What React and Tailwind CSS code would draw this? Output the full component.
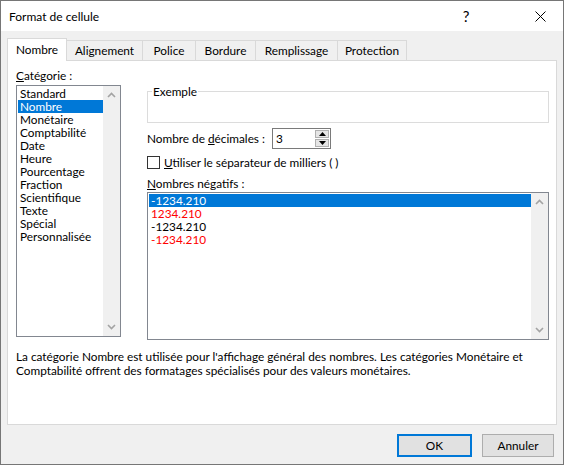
import React from 'react';

const font = { fontFamily: 'Lato, "Noto Sans", sans-serif' };

const tabs = [
    { label: 'Nombre', w: 'w-[60px]' },
    { label: 'Alignement', w: 'w-[76px]' },
    { label: 'Police', w: 'w-[53px]' },
    { label: 'Bordure', w: 'w-[60px]' },
    { label: 'Remplissage', w: 'w-[82px]' },
    { label: 'Protection', w: 'w-[69px]' },
];

const categories = [
    'Standard', 'Nombre', 'Monétaire', 'Comptabilité', 'Date', 'Heure',
    'Pourcentage', 'Fraction', 'Scientifique', 'Texte', 'Spécial', 'Personnalisée',
];

const negatives = [
    { v: '-1234.210', cls: 'bg-[#0078d7] text-white' },
    { v: '1234.210', cls: 'text-[#ff0000]' },
    { v: '-1234.210', cls: 'text-black' },
    { v: '-1234.210', cls: 'text-[#ff0000]' },
];

const Chevron = ({ down }) => (
    <svg width="9" height="6" viewBox="0 0 9 6" className="block">
        <path d={down ? 'M1 1 L4.5 4.5 L8 1' : 'M1 5 L4.5 1.5 L8 5'} fill="none" stroke="#a3a3a3" strokeWidth="1.6" />
    </svg>
);

const ScrollTrack = () => (
    <div className="w-[17px] bg-[#f0f0f0] flex flex-col justify-between items-center py-[6px]">
        <Chevron />
        <Chevron down />
    </div>
);

const App = () => {
    return (
        <div className="w-[564px] h-[465px] border border-[#767676] flex flex-col text-[11.8px] text-black leading-[13px] whitespace-nowrap" style={font}>
            {/* title bar */}
            <div className="h-[30px] bg-white flex items-center shrink-0">
                <span className="pl-[8px] flex-1 text-[12px]">Format de cellule</span>
                <div className="w-[46px] h-full flex items-center justify-center text-[15px] mr-[28px]">?</div>
                <div className="w-[46px] h-full flex items-center justify-center">
                    <svg width="11" height="11" viewBox="0 0 11 11">
                        <path d="M0.5 0.5 L10.5 10.5 M10.5 0.5 L0.5 10.5" stroke="#000" strokeWidth="1" />
                    </svg>
                </div>
            </div>

            <div className="flex-1 bg-[#f0f0f0] px-[6px] flex flex-col">
                {/* tabs */}
                <div className="flex items-end h-[30px] relative z-10 -mb-px">
                    {tabs.map((t, i) =>
                        i === 0 ? (
                            <div key={t.label} className={`${t.w} h-[23px] bg-white border border-b-0 border-[#d9d9d9] flex items-center justify-center pb-[2px]`}>
                                {t.label}
                            </div>
                        ) : (
                            <div key={t.label} className={`${t.w} h-[20px] border-t border-r border-[#d9d9d9] bg-[#f0f0f0] flex items-center justify-center mb-px`}>
                                {t.label}
                            </div>
                        )
                    )}
                </div>

                {/* panel */}
                <div className="h-[365px] bg-white border border-[#d9d9d9] pt-[8px] pl-[8px] pr-[7px] flex flex-col">
                    <div className="flex gap-[26px]">
                        <div className="flex flex-col">
                            <span className="h-[16px]"><span className="underline">C</span>atégorie :</span>
                            <div className="w-[105px] h-[252px] border border-[#828790] flex">
                                <div className="flex-1 pt-px pl-px">
                                    {categories.map((c) => (
                                        <div key={c} className={`h-[13px] pl-[2px] ${c === 'Nombre' ? 'bg-[#0078d7] text-white' : ''}`}>{c}</div>
                                    ))}
                                </div>
                                <ScrollTrack />
                            </div>
                        </div>

                        <div className="flex-1 flex flex-col pt-[16px]">
                            <fieldset className="h-[38px] border border-[#dcdcdc] pl-[4px]">
                                <legend className="px-px">Exemple</legend>
                            </fieldset>

                            <div className="flex items-center mt-[5px] h-[21px]">
                                <span className="w-[125px]">Nombre de <span className="underline">d</span>écimales :</span>
                                <div className="w-[59px] h-[21px] border border-[#7a7a7a] flex items-center">
                                    <span className="flex-1 pl-[3px]">3</span>
                                    <div className="w-[16px] h-full flex flex-col p-px gap-px">
                                        <div className="flex-1 bg-[#e5e5e5] border border-[#b0b0b0] flex items-center justify-center">
                                            <svg width="7" height="4" viewBox="0 0 7 4"><path d="M0 4 L3.5 0 L7 4 Z" fill="#000" /></svg>
                                        </div>
                                        <div className="flex-1 bg-[#e5e5e5] border border-[#b0b0b0] flex items-center justify-center">
                                            <svg width="7" height="4" viewBox="0 0 7 4"><path d="M0 0 L3.5 4 L7 0 Z" fill="#000" /></svg>
                                        </div>
                                    </div>
                                </div>
                            </div>

                            <div className="flex items-center mt-[6px] h-[14px]">
                                <div className="w-[13px] h-[13px] border border-[#333] bg-white" />
                                <span className="ml-[4px]"><span className="underline">U</span>tiliser le séparateur de milliers ( )</span>
                            </div>

                            <span className="mt-[8px] h-[15px]"><span className="underline">N</span>ombres négatifs :</span>
                            <div className="h-[148px] border border-[#828790] flex">
                                <div className="flex-1 pt-px pl-px">
                                    {negatives.map((n, i) => (
                                        <div key={i} className={`h-[13px] pl-[2px] ${n.cls}`}>{n.v}</div>
                                    ))}
                                </div>
                                <ScrollTrack />
                            </div>
                        </div>
                    </div>

                    <p className="mt-[10px] leading-[14px]">
                        La catégorie Nombre est utilisée pour l'affichage général des nombres. Les catégories Monétaire et
                        <br />
                        Comptabilité offrent des formatages spécialisés pour des valeurs monétaires.
                    </p>
                </div>

                {/* buttons */}
                <div className="flex justify-end gap-[10px] mt-[9px] pr-[3px]">
                    <button className="w-[75px] h-[23px] bg-[#e1e1e1] border-2 border-[#0078d7]">OK</button>
                    <button className="w-[72px] h-[23px] bg-[#e1e1e1] border border-[#adadad]">Annuler</button>
                </div>
            </div>
        </div>
    );
};

export default App;
